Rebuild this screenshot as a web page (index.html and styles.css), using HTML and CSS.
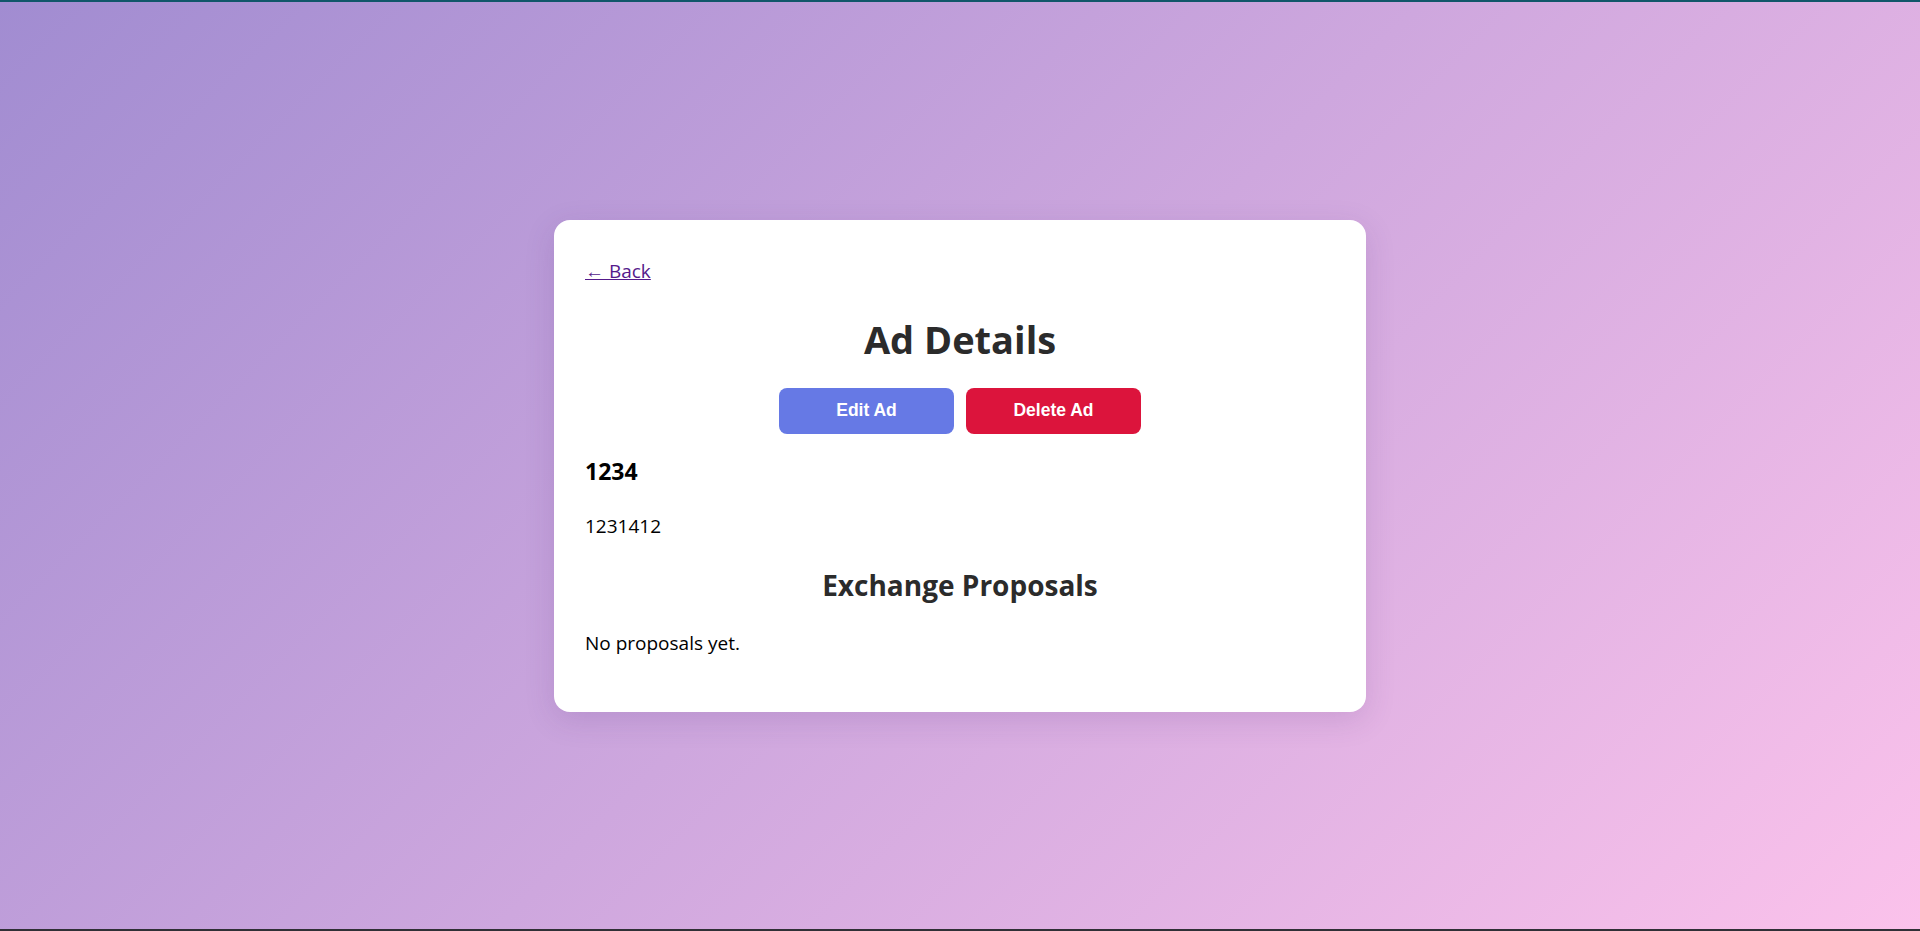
FILE: index.html
```html
<!DOCTYPE html>
<html lang="en">
<head>
<meta charset="utf-8">
<title>Ad Details</title>
<link rel="stylesheet" href="styles.css">
</head>
<body>
<div class="edge edge-top"></div>
<main class="stage">
  <section class="card">
    <a class="back" href="#">← Back</a>
    <h1 class="title">Ad Details</h1>
    <div class="actions">
      <button class="btn btn-edit" type="button">Edit Ad</button>
      <button class="btn btn-delete" type="button">Delete Ad</button>
    </div>
    <h3 class="ad-title">1234</h3>
    <p class="ad-desc">1231412</p>
    <h2 class="section-title">Exchange Proposals</h2>
    <p class="empty">No proposals yet.</p>
  </section>
</main>
<div class="edge edge-bottom"></div>
</body>
</html>
```
FILE: styles.css
```css
* { box-sizing: border-box; }
html, body { height: 100%; }
body {
  margin: 0;
  display: flex;
  flex-direction: column;
  background: linear-gradient(135deg, #a18cd1 0%, #fbc2eb 100%);
  font-family: "Open Sans", "Noto Sans", sans-serif;
  font-size: 19px;
  color: #000;
}
.edge { height: 2px; flex: none; }
.edge-top { background: #11566a; }
.edge-bottom { background: #303036; }
.stage {
  flex: 1;
  display: flex;
  align-items: center;
  justify-content: center;
}
.card {
  width: 812px;
  background: #fff;
  border-radius: 16px;
  padding: 38px 31px 56px;
  box-shadow: 0 8px 30px rgba(80, 40, 120, 0.15);
}
.back {
  display: inline-block;
  color: #551a8b;
  font-size: 19px;
  line-height: 26px;
}
.title {
  margin: 30px 0 0;
  text-align: center;
  font-size: 38px;
  line-height: 50px;
  font-weight: 700;
  color: #2b2b2b;
}
.actions {
  display: flex;
  justify-content: center;
  gap: 12px;
  margin-top: 24px;
}
.btn {
  width: 175px;
  height: 46px;
  border: none;
  border-radius: 8px;
  color: #fff;
  font-family: "Liberation Sans", Arial, sans-serif;
  font-weight: 700;
  font-size: 17.5px;
  cursor: pointer;
}
.btn-edit { background: #6679e5; }
.btn-delete { background: #dc143c; }
.ad-title {
  margin: 22px 0 0;
  font-size: 23px;
  line-height: 30px;
  font-weight: 700;
}
.ad-desc {
  margin: 27px 0 0;
  line-height: 26px;
}
.section-title {
  margin: 28px 0 0;
  text-align: center;
  font-size: 28px;
  line-height: 36px;
  font-weight: 700;
  color: #2b2b2b;
}
.empty {
  margin: 27px 0 0;
  line-height: 26px;
}
```
